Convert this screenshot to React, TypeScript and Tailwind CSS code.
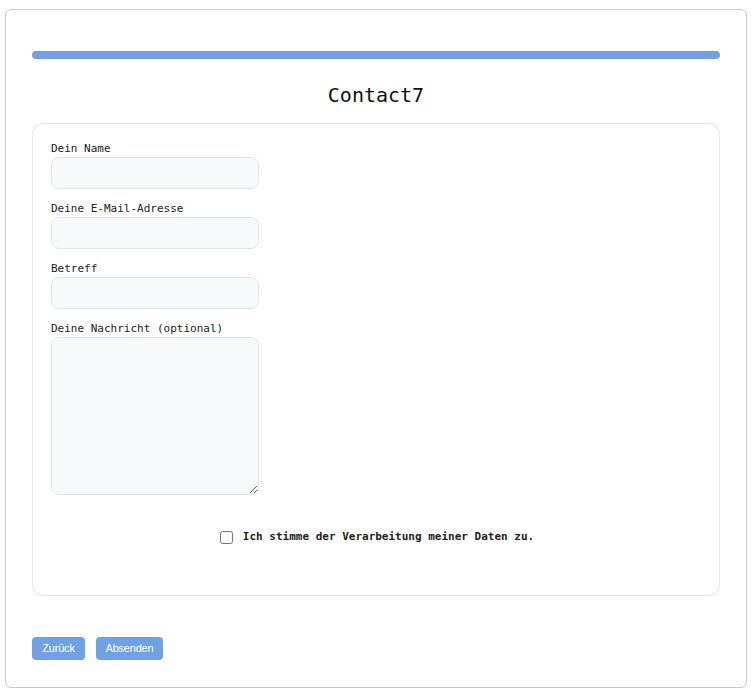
import React from "react";

const mono = { fontFamily: '"DejaVu Sans Mono", "Liberation Mono", monospace' };
const sans = { fontFamily: '"Liberation Sans", "Noto Sans", sans-serif' };

function Field({ label, tall }: { label: string; tall?: boolean }) {
  return (
    <div className="flex flex-col">
      <label className="text-[11px] leading-[16px] text-[#222]" style={mono}>
        {label}
      </label>
      {tall ? (
        <textarea className="w-[208px] h-[158px] rounded-[8px] border border-[#e3e5e8] bg-[#f8f9fa] outline-none block" />
      ) : (
        <input className="w-[208px] h-[32px] rounded-[8px] border border-[#e3e5e8] bg-[#f8f9fa] outline-none block" />
      )}
    </div>
  );
}

export default function App() {
  return (
    <div className="pt-[9px] px-[5px] bg-white min-h-[698px]">
      <div className="w-[742px] h-[679px] border border-[#c9c9c9] rounded-[6px] bg-white px-[26px] pt-[41px] flex flex-col">
        <div className="h-[8px] w-[688px] rounded-full bg-[#6fa1e4]" />
        <h1 className="mt-[22px] text-center text-[20px] leading-[28px] text-[#111]" style={mono}>
          Contact7
        </h1>
        <div className="mt-[14px] bg-[#fafafa]">
          <div className="h-[473px] rounded-[12px] border border-[#e6e6e6] bg-white pl-[18px] pt-[17px] flex flex-col">
            <div className="flex flex-col gap-[12px]">
              <Field label="Dein Name" />
              <Field label="Deine E-Mail-Adresse" />
              <Field label="Betreff" />
              <Field label="Deine Nachricht (optional)" tall />
            </div>
            <div className="mt-[34px] flex items-center justify-center gap-[10px] pr-[16px] h-[16px]">
              <input type="checkbox" className="m-0 w-[13px] h-[13px]" />
              <span className="text-[11px] font-bold text-[#222] leading-[16px]" style={mono}>
                Ich stimme der Verarbeitung meiner Daten zu.
              </span>
            </div>
          </div>
        </div>
        <div className="mt-[41px] flex gap-[11px]">
          <button
            className="w-[53px] h-[23px] rounded-[4px] bg-[#6fa1e4] text-white text-[11px] tracking-[-0.2px] leading-[23px] text-center"
            style={sans}
          >
            Zurück
          </button>
          <button
            className="w-[67px] h-[23px] rounded-[4px] bg-[#6fa1e4] text-white text-[11px] tracking-[-0.2px] leading-[23px] text-center"
            style={sans}
          >
            Absenden
          </button>
        </div>
      </div>
    </div>
  );
}
